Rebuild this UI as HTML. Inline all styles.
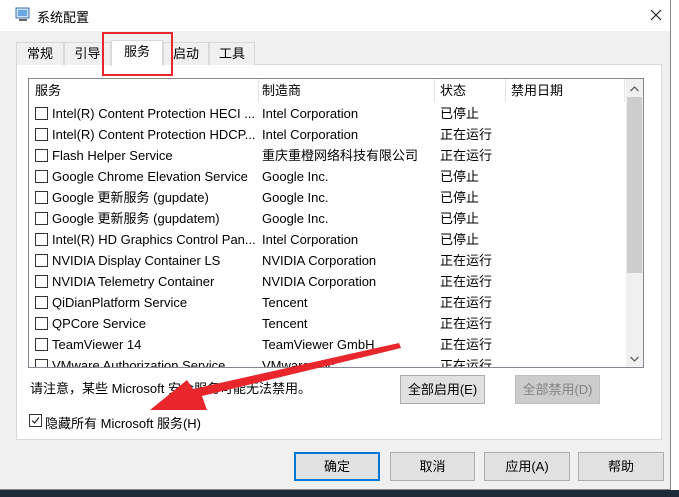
<!DOCTYPE html>
<html><head><meta charset="utf-8"><style>
*{box-sizing:border-box;margin:0;padding:0}
body{width:679px;height:497px;overflow:hidden;background:#fff;font-family:"Liberation Sans","Noto Sans CJK SC",sans-serif;font-size:12px;color:#000;position:relative}
.a{position:absolute}
.win{left:0;top:0;width:671px;height:490px;background:#f0f0f0;border-right:1px solid #888;border-bottom:1px solid #888}
.title{left:0;top:0;width:670px;height:31px;background:#fff}
.tab{top:42px;height:23px;border:1px solid #d9d9d9;border-bottom:none;background:#f0f0f0;text-align:center;line-height:21px;font-size:13px}
.panel{left:16px;top:64px;width:646px;height:376px;background:#fff;border:1px solid #d9d9d9}
.list{left:28px;top:78px;width:616px;height:290px;border:1px solid #828790;background:#fff;overflow:hidden}
.row{position:absolute;left:0;height:21px;line-height:21px;white-space:nowrap;font-size:13px}
.cb{position:absolute;left:6px;top:4px;width:13px;height:13px;border:1px solid #333;background:#fff}
.btn{height:29px;border:1px solid #adadad;background:#e1e1e1;text-align:center;line-height:27px;font-size:13px}
</style></head><body>
<div class="a" style="left:0;top:490px;width:679px;height:7px;background:#1d2a3a"></div>
<div class="a win"></div>
<div class="a title"></div>
<svg class="a" style="left:15px;top:7px" width="16" height="16"><rect x="1" y="1" width="13" height="10" fill="#cfe3f7" stroke="#3a6fb0"/><rect x="3" y="3" width="9" height="6" fill="#6aa7e0"/><rect x="4" y="12" width="8" height="2" fill="#666"/></svg>
<div class="a" style="left:37px;top:7px;font-size:13px">系统配置</div>
<svg class="a" style="left:650px;top:9px" width="12" height="12"><path d="M1 1L11 11M11 1L1 11" stroke="#222" stroke-width="1.2"/></svg>
<div class="a panel"></div>
<div class="a tab" style="left:16px;width:48px">常规</div>
<div class="a tab" style="left:64px;width:47px">引导</div>
<div class="a tab" style="left:163px;width:46px">启动</div>
<div class="a tab" style="left:209px;width:46px">工具</div>
<div class="a tab" style="left:111px;top:40px;width:52px;height:26px;background:#fff;border-color:#d9d9d9">服务</div>
<div class="a" style="left:102px;top:32px;width:71px;height:44px;border:2px solid #e8262b"></div>
<div class="a list">
 <div class="row" style="top:0;left:0;width:600px;height:23px">
  <span class="a" style="left:6px;top:1px">服务</span>
  <span class="a" style="left:229px;top:0;width:1px;height:23px;background:#e5e5e5"></span>
  <span class="a" style="left:233px;top:1px">制造商</span>
  <span class="a" style="left:405px;top:0;width:1px;height:23px;background:#e5e5e5"></span>
  <span class="a" style="left:411px;top:1px">状态</span>
  <span class="a" style="left:476px;top:0;width:1px;height:23px;background:#e5e5e5"></span>
  <span class="a" style="left:482px;top:1px">禁用日期</span>
  <span class="a" style="left:595px;top:0;width:1px;height:23px;background:#e5e5e5"></span>
 </div>
 <div class="a" style="left:597px;top:0;width:17px;height:288px;background:#f0f0f0"></div>
 <div class="a" style="left:598px;top:18px;width:15px;height:176px;background:#cdcdcd"></div>
 <svg class="a" style="left:600px;top:6px" width="11" height="8"><path d="M1.5 6L5.5 2L9.5 6" stroke="#606060" fill="none" stroke-width="1.3"/></svg>
 <svg class="a" style="left:600px;top:276px" width="11" height="8"><path d="M1.5 2L5.5 6L9.5 2" stroke="#606060" fill="none" stroke-width="1.3"/></svg>
</div>
<div class="a" style="left:29px;top:103px;width:597px;height:264px;overflow:hidden">
<div class="row" style="top:0"><i class="cb"></i><span class="a" style="left:23px">Intel(R) Content Protection HECI ...</span><span class="a" style="left:233px">Intel Corporation</span><span class="a" style="left:411px">已停止</span></div>
<div class="row" style="top:21px"><i class="cb"></i><span class="a" style="left:23px">Intel(R) Content Protection HDCP...</span><span class="a" style="left:233px">Intel Corporation</span><span class="a" style="left:411px">正在运行</span></div>
<div class="row" style="top:42px"><i class="cb"></i><span class="a" style="left:23px">Flash Helper Service</span><span class="a" style="left:233px">重庆重橙网络科技有限公司</span><span class="a" style="left:411px">正在运行</span></div>
<div class="row" style="top:63px"><i class="cb"></i><span class="a" style="left:23px">Google Chrome Elevation Service</span><span class="a" style="left:233px">Google Inc.</span><span class="a" style="left:411px">已停止</span></div>
<div class="row" style="top:84px"><i class="cb"></i><span class="a" style="left:23px">Google 更新服务 (gupdate)</span><span class="a" style="left:233px">Google Inc.</span><span class="a" style="left:411px">已停止</span></div>
<div class="row" style="top:105px"><i class="cb"></i><span class="a" style="left:23px">Google 更新服务 (gupdatem)</span><span class="a" style="left:233px">Google Inc.</span><span class="a" style="left:411px">已停止</span></div>
<div class="row" style="top:126px"><i class="cb"></i><span class="a" style="left:23px">Intel(R) HD Graphics Control Pan...</span><span class="a" style="left:233px">Intel Corporation</span><span class="a" style="left:411px">已停止</span></div>
<div class="row" style="top:147px"><i class="cb"></i><span class="a" style="left:23px">NVIDIA Display Container LS</span><span class="a" style="left:233px">NVIDIA Corporation</span><span class="a" style="left:411px">正在运行</span></div>
<div class="row" style="top:168px"><i class="cb"></i><span class="a" style="left:23px">NVIDIA Telemetry Container</span><span class="a" style="left:233px">NVIDIA Corporation</span><span class="a" style="left:411px">正在运行</span></div>
<div class="row" style="top:189px"><i class="cb"></i><span class="a" style="left:23px">QiDianPlatform Service</span><span class="a" style="left:233px">Tencent</span><span class="a" style="left:411px">正在运行</span></div>
<div class="row" style="top:210px"><i class="cb"></i><span class="a" style="left:23px">QPCore Service</span><span class="a" style="left:233px">Tencent</span><span class="a" style="left:411px">正在运行</span></div>
<div class="row" style="top:231px"><i class="cb"></i><span class="a" style="left:23px">TeamViewer 14</span><span class="a" style="left:233px">TeamViewer GmbH</span><span class="a" style="left:411px">正在运行</span></div>
<div class="row" style="top:252px"><i class="cb"></i><span class="a" style="left:23px">VMware Authorization Service</span><span class="a" style="left:233px">VMware, Inc.</span><span class="a" style="left:411px">正在运行</span></div>
</div>
<div class="a" style="left:30px;top:378px;font-size:13px">请注意，某些 Microsoft 安全服务可能无法禁用。</div>
<div class="a btn" style="left:400px;top:375px;width:85px">全部启用(E)</div>
<div class="a btn" style="left:515px;top:375px;width:85px;background:#ccc;border-color:#bfbfbf;color:#838383">全部禁用(D)</div>
<div class="a" style="left:29px;top:414px;width:13px;height:13px;border:1px solid #333;background:#fff"></div>
<svg class="a" style="left:30px;top:415px" width="11" height="11"><path d="M2 5.5L4.5 8L9 2.5" stroke="#222" fill="none" stroke-width="1.2"/></svg>
<div class="a" style="left:45px;top:413px;font-size:13px">隐藏所有 Microsoft 服务(H)</div>
<svg class="a" style="left:0;top:0" width="679" height="497"><polygon points="399,343 401,348 202,396 207,410 150,410 187,380 193,389" fill="#e8262b"/></svg>
<div class="a btn" style="left:294px;top:452px;width:86px;border:2px solid #0078d7;line-height:25px">确定</div>
<div class="a btn" style="left:390px;top:452px;width:85px">取消</div>
<div class="a btn" style="left:484px;top:452px;width:86px">应用(A)</div>
<div class="a btn" style="left:578px;top:452px;width:86px">帮助</div>
</body></html>
